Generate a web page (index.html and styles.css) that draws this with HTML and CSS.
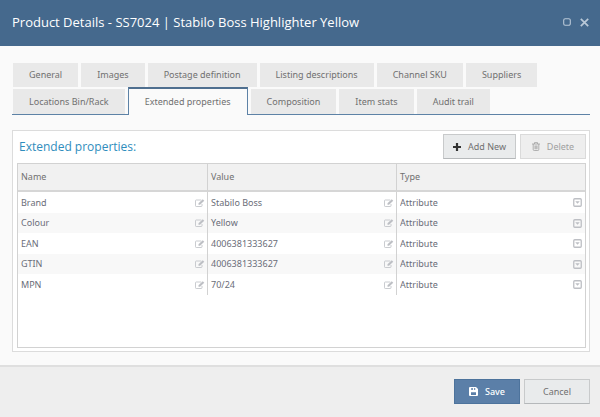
FILE: index.html
```html
<!DOCTYPE html>
<html lang="en">
<head>
<meta charset="utf-8">
<title>Product Details</title>
<link rel="stylesheet" href="styles.css">
</head>
<body>
<svg class="defs" aria-hidden="true">
  <symbol id="edit" viewBox="0 0 20 16"><path d="M14 10v3.500a1.500 1.500 0 0 1-1.500 1.500h-10a1.500 1.500 0 0 1-1.500-1.500v-10a1.500 1.500 0 0 1 1.500-1.500h10" fill="none" stroke="currentColor" stroke-width="1.600"/><path d="M7 11.500V8.500L15.500 0.500l3 3L10 11.500z" fill="currentColor"/></symbol>
  <symbol id="caret" viewBox="0 0 18 18"><rect x="1.500" y="1.500" width="15" height="15" rx="2" fill="none" stroke="currentColor" stroke-width="2.600"/><path d="M4.500 6.500h9l-4.500 5z" fill="currentColor"/></symbol>
</svg>
<main class="dialog">
  <header class="titlebar">
    <h1>Product Details - SS7024 | Stabilo Boss Highlighter Yellow</h1>
    <div class="window-tools">
      <button type="button" aria-label="Maximise"><svg width="8" height="8" viewBox="0 0 8 8"><rect x=".7" y=".7" width="6.600" height="6.600" rx="1.500" fill="none" stroke="currentColor" stroke-width="1.100"/></svg></button>
      <button type="button" aria-label="Close"><svg width="9" height="9" viewBox="0 0 9 9"><path d="M.8.8l7.400 7.400M8.200.8L.8 8.200" stroke="currentColor" stroke-width="1.700"/></svg></button>
    </div>
  </header>
  <section class="content">
    <div class="tabs" role="tablist">
      <div class="tab-row">
        <button type="button" role="tab">General</button>
        <button type="button" role="tab">Images</button>
        <button type="button" role="tab">Postage definition</button>
        <button type="button" role="tab">Listing descriptions</button>
        <button type="button" role="tab">Channel SKU</button>
        <button type="button" role="tab">Suppliers</button>
      </div>
      <div class="tab-row">
        <button type="button" role="tab">Locations Bin/Rack</button>
        <button type="button" role="tab" class="active" aria-selected="true">Extended properties</button>
        <button type="button" role="tab">Composition</button>
        <button type="button" role="tab">Item stats</button>
        <button type="button" role="tab">Audit trail</button>
      </div>
    </div>
    <div class="panel">
      <div class="panel-head">
        <h2>Extended properties:</h2>
        <button type="button" class="btn"><svg width="8" height="8" viewBox="0 0 8 8"><path d="M4 0v8M0 4h8" stroke="#333" stroke-width="2.200"/></svg>Add New</button>
        <button type="button" class="btn" disabled><svg width="8" height="9" viewBox="0 0 8 9"><path d="M0 2h8M2.500 2V.6h3V2M1.200 2v5.500q0 1 1 1h3.600q1 0 1-1V2M3 3.500v3.700M4 3.500v3.700M5 3.500v3.700" fill="none" stroke="currentColor" stroke-width=".8"/></svg>Delete</button>
      </div>
      <div class="grid">
        <table>
          <thead><tr><th>Name</th><th>Value</th><th>Type</th></tr></thead>
          <tbody>
            <tr>
              <td><div class="cell"><span>Brand</span><button type="button" aria-label="Edit name"><svg><use href="#edit"/></svg></button></div></td>
              <td><div class="cell"><span>Stabilo Boss</span><button type="button" aria-label="Edit value"><svg><use href="#edit"/></svg></button></div></td>
              <td><div class="cell"><select aria-label="Type"><option>Attribute</option></select><svg class="caret"><use href="#caret"/></svg></div></td>
            </tr>
            <tr>
              <td><div class="cell"><span>Colour</span><button type="button" aria-label="Edit name"><svg><use href="#edit"/></svg></button></div></td>
              <td><div class="cell"><span>Yellow</span><button type="button" aria-label="Edit value"><svg><use href="#edit"/></svg></button></div></td>
              <td><div class="cell"><select aria-label="Type"><option>Attribute</option></select><svg class="caret"><use href="#caret"/></svg></div></td>
            </tr>
            <tr>
              <td><div class="cell"><span>EAN</span><button type="button" aria-label="Edit name"><svg><use href="#edit"/></svg></button></div></td>
              <td><div class="cell"><span>4006381333627</span><button type="button" aria-label="Edit value"><svg><use href="#edit"/></svg></button></div></td>
              <td><div class="cell"><select aria-label="Type"><option>Attribute</option></select><svg class="caret"><use href="#caret"/></svg></div></td>
            </tr>
            <tr>
              <td><div class="cell"><span>GTIN</span><button type="button" aria-label="Edit name"><svg><use href="#edit"/></svg></button></div></td>
              <td><div class="cell"><span>4006381333627</span><button type="button" aria-label="Edit value"><svg><use href="#edit"/></svg></button></div></td>
              <td><div class="cell"><select aria-label="Type"><option>Attribute</option></select><svg class="caret"><use href="#caret"/></svg></div></td>
            </tr>
            <tr>
              <td><div class="cell"><span>MPN</span><button type="button" aria-label="Edit name"><svg><use href="#edit"/></svg></button></div></td>
              <td><div class="cell"><span>70/24</span><button type="button" aria-label="Edit value"><svg><use href="#edit"/></svg></button></div></td>
              <td><div class="cell"><select aria-label="Type"><option>Attribute</option></select><svg class="caret"><use href="#caret"/></svg></div></td>
            </tr>
          </tbody>
        </table>
      </div>
    </div>
  </section>
  <footer class="actions">
    <button type="button" class="btn primary"><svg width="9" height="9" viewBox="0 0 9 9"><path d="M0 1q0-1 1-1h6l2 2v6q0 1-1 1H1Q0 9 0 8z" fill="currentColor"/><path d="M2.300 1h1.500v2h-1.500zM5.200 1h1v2h-1zM2 5.200h5V8H2z" fill="#5b7fa8"/></svg>Save</button>
    <button type="button" class="btn">Cancel</button>
  </footer>
</main>
</body>
</html>
```

FILE: styles.css
```css
* { box-sizing: border-box; }

body {
  margin: 0;
  font: 9px/12px "Noto Sans", "Open Sans", sans-serif;
  color: #707070;
}

button, select {
  font: inherit;
  color: inherit;
  border: 0;
  background: none;
  padding: 0;
  margin: 0;
}

.defs { display: none; }

.dialog {
  display: flex;
  flex-direction: column;
  min-height: 100vh;
  background: #fafafa;
}

.titlebar {
  display: flex;
  align-items: center;
  justify-content: space-between;
  height: 46px;
  padding: 0 11px 2px 12px;
  background: #45698d;
  color: #fff;
}

.titlebar h1 {
  margin: 0;
  font-family: "Open Sans", "Noto Sans", sans-serif;
  font-size: 13px;
  line-height: 18px;
  font-weight: 400;
}

.window-tools {
  display: flex;
  align-items: center;
  gap: 9px;
  color: #b9c8d7;
}

.window-tools button { display: flex; }

.content {
  flex: 1;
  display: flex;
  flex-direction: column;
  padding: 17px 10px 13px 12px;
}

.tab-row {
  display: flex;
  gap: 3px;
  padding-left: 1px;
}

.tab-row + .tab-row {
  margin-top: 1px;
  border-bottom: 1px solid #5d82a6;
}

.tab-row button {
  height: 24px;
  padding: 0 16px;
  background: #e9e9e9;
}

.tab-row + .tab-row button {
  height: 25px;
  margin-top: 1px;
}

.tab-row + .tab-row .active {
  height: 28px;
  margin: -1px 0;
  background: #fafafa;
  border: 1px solid #5d82a6;
  border-top: 2px solid #4f6f8f;
  border-bottom: 0;
}

.panel {
  flex: 1;
  display: flex;
  flex-direction: column;
  margin-top: 15px;
  padding: 3px 3px 3px 4px;
  border: 1px solid #dcdcdc;
  background: #fff;
}

.panel-head {
  display: flex;
  align-items: center;
  gap: 4px;
  padding: 0 0 4px 2px;
}

h2 {
  flex: 1;
  margin: 0;
  font-family: "Open Sans", "Noto Sans", sans-serif;
  font-size: 12px;
  line-height: 16px;
  font-weight: 400;
  color: #2f8dbd;
}

.btn {
  display: flex;
  align-items: center;
  justify-content: center;
  gap: 7px;
  min-width: 66px;
  height: 25px;
  padding: 0 9px;
  border: 1px solid #c8cacb;
  border-bottom-color: #b5b8ba;
  background: #e9ebec;
}

.btn:disabled {
  color: #a0a0a0;
  background: #eee;
  border-color: #dadada;
}

.primary {
  color: #fff;
  font-weight: 500;
  background: #5b7fa8;
  border-color: #4d739c;
}

.grid {
  flex: 1;
  border: 1px solid #d2d2d2;
}

table {
  width: 100%;
  table-layout: fixed;
  border-collapse: separate;
  border-spacing: 0;
}

th {
  height: 28px;
  padding: 0 3px;
  text-align: left;
  font-weight: 400;
  background: #f1f1f1;
  border-bottom: 2px solid #d6d6d6;
}

th + th, td + td { border-left: 1px solid #d2d2d2; }

td {
  height: 21px;
  padding: 0 3px;
  color: #6a6d78;
}

td:not(:last-child) { padding-right: 2px; }

tbody tr:nth-child(even) td {
  height: 20px;
  background: #f8f8f8;
}

.cell {
  display: flex;
  align-items: center;
}

.cell span, .cell select { flex: 1; }

.cell select { appearance: none; }

.cell button {
  display: flex;
  color: #bdbfc4;
}

.cell svg {
  width: 10px;
  height: 8px;
}

.cell .caret {
  width: 9px;
  height: 9px;
  color: #bdbfc4;
  pointer-events: none;
}

.actions {
  display: flex;
  justify-content: flex-end;
  gap: 4px;
  padding: 12px 10px 13px;
  border-top: 2px solid #dfdfdf;
  background: #eee;
}
```
